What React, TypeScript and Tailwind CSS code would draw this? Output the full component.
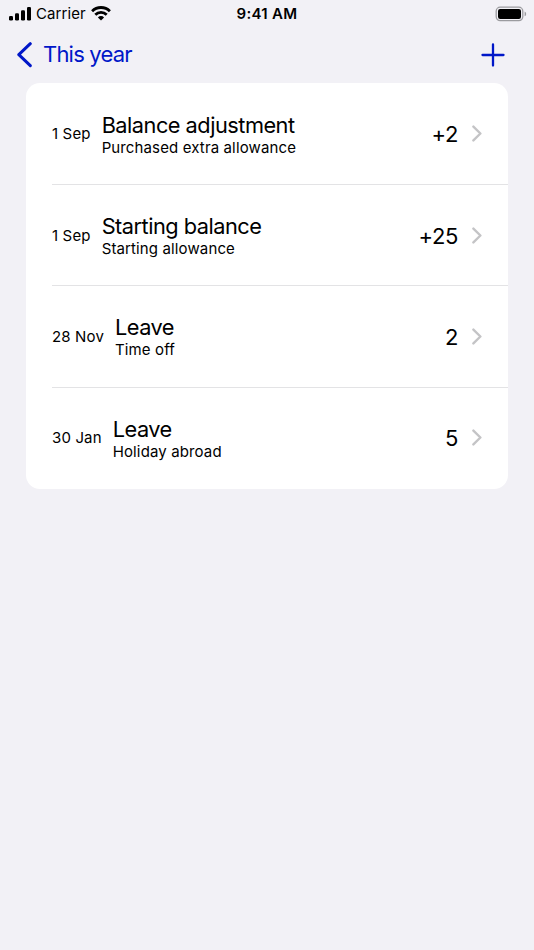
type Entry = {
  date: string;
  title: string;
  note: string;
  amount: string;
};

const entries: Entry[] = [
  { date: "1 Sep", title: "Balance adjustment", note: "Purchased extra allowance", amount: "+2" },
  { date: "1 Sep", title: "Starting balance", note: "Starting allowance", amount: "+25" },
  { date: "28 Nov", title: "Leave", note: "Time off", amount: "2" },
  { date: "30 Jan", title: "Leave", note: "Holiday abroad", amount: "5" },
];

function StatusBar() {
  return (
    <div className="grid h-7 grid-cols-3 items-center pl-[9px] pr-[7px] text-black">
      <div className="flex items-center">
        <svg width="23" height="14" viewBox="0 0 23 14" fill="currentColor">
          <rect x="0" y="9" width="4" height="4.5" rx="1.2" />
          <rect x="6" y="6.2" width="4" height="7.3" rx="1.2" />
          <rect x="12" y="3.2" width="4" height="10.3" rx="1.2" />
          <rect x="18" y="0" width="4" height="13.5" rx="1.2" />
        </svg>
        <span className="ml-1 text-[15px] leading-7 tracking-[0.08px]">Carrier</span>
        <svg className="ml-[5.5px] -mt-px" width="20" height="15" viewBox="0 0 20 15" fill="none" stroke="currentColor" strokeWidth="2.8">
          <path d="M1.1 5.2a12.6 12.6 0 0 1 17.8 0" />
          <path d="M4.3 8.7a8.1 8.1 0 0 1 11.4 0" />
          <path d="M10 14.5 6.9 11.4a4.4 4.4 0 0 1 6.2 0Z" fill="currentColor" stroke="none" />
        </svg>
      </div>
      <div className="pr-0.5 text-center text-[15px] font-semibold leading-7 tracking-[0.3px]">9:41 AM</div>
      <svg className="-mt-px justify-self-end" width="32" height="16" viewBox="0 0 32 16">
        <rect x="1.2" y="1.2" width="26.6" height="13.4" rx="4" fill="none" stroke="#9b9b9f" strokeWidth="1.3" />
        <rect x="3" y="2.9" width="23" height="10" rx="2.2" fill="#000" />
        <path d="M29.6 5.5a2.6 2.6 0 0 1 0 4.8Z" fill="#9b9b9f" />
      </svg>
    </div>
  );
}

function NavBar() {
  return (
    <div className="flex h-[55px] items-center justify-between pb-0.5 pl-4 pr-[29px] text-[#0017c8]">
      <button className="flex items-center">
        <svg width="17" height="26" viewBox="0 0 17 26" fill="none" stroke="currentColor" strokeWidth="3" strokeLinecap="round" strokeLinejoin="round">
          <path d="M14.3 1.7 2.8 12.7l11.5 11" />
        </svg>
        <span className="ml-2.5 pb-px text-[22px] leading-7 tracking-[-0.8px]">This year</span>
      </button>
      <button>
        <svg width="24" height="24" viewBox="0 0 24 24" stroke="currentColor" strokeWidth="2.3" strokeLinecap="round">
          <path d="M12 1.5v21M1.5 12h21" />
        </svg>
      </button>
    </div>
  );
}

function EntryRow({ entry, first }: { entry: Entry; first: boolean }) {
  return (
    <li className={`flex h-[101.2px] items-center pr-[26px] ${first ? "" : "border-t border-[#e3e3e5]"}`}>
      <span className="pt-px text-[15px] leading-5 tracking-[0.15px]">{entry.date}</span>
      <div className="ml-[11px] flex-1 pt-[3px]">
        <div className="text-[21.75px] leading-6 tracking-[-0.5px]">{entry.title}</div>
        <div className="mt-px text-[15px] leading-5 tracking-[0.13px]">{entry.note}</div>
      </div>
      <span className="pt-px text-[22px] leading-7 tracking-[-0.4px]">{entry.amount}</span>
      <svg className="ml-3.5" width="10" height="17" viewBox="0 0 10 17" fill="none" stroke="#c4c4c6" strokeWidth="2.4" strokeLinecap="round" strokeLinejoin="round">
        <path d="m1.4 1.6 7 6.9-7 6.9" />
      </svg>
    </li>
  );
}

export default function App() {
  return (
    <div className="min-h-screen bg-[#f2f1f6] font-['Inter',sans-serif] text-black">
      <StatusBar />
      <NavBar />
      <ul className="mx-[26px] rounded-[14px] bg-white pb-px pl-[26px]">
        {entries.map((entry, i) => (
          <EntryRow key={i} entry={entry} first={i === 0} />
        ))}
      </ul>
    </div>
  );
}
